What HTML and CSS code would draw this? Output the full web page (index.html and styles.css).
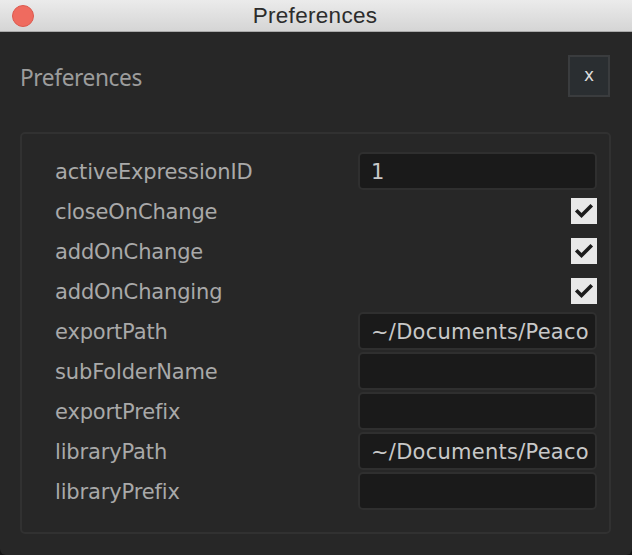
FILE: index.html
```html
<!DOCTYPE html>
<html>
<head>
<meta charset="utf-8">
<link rel="stylesheet" href="styles.css">
</head>
<body>
<div class="window">
  <div class="titlebar">
    <span class="traffic"></span>
    <span class="wintitle">Preferences</span>
  </div>
  <div class="content">
    <div class="header">
      <h1 class="heading">Preferences</h1>
      <button class="close">x</button>
    </div>
    <div class="panel">
      <div class="row"><span class="label">activeExpressionID</span><div class="field">1</div></div>
      <div class="row"><span class="label">closeOnChange</span><span class="check"><svg width="26" height="26" viewBox="0 0 26 26"><path d="M6.5 13.5 L10.5 17.5 L19.5 8.5" fill="none" stroke="#1c1c1c" stroke-width="3.6" stroke-linecap="square"/></svg></span></div>
      <div class="row"><span class="label">addOnChange</span><span class="check"><svg width="26" height="26" viewBox="0 0 26 26"><path d="M6.5 13.5 L10.5 17.5 L19.5 8.5" fill="none" stroke="#1c1c1c" stroke-width="3.6" stroke-linecap="square"/></svg></span></div>
      <div class="row"><span class="label">addOnChanging</span><span class="check"><svg width="26" height="26" viewBox="0 0 26 26"><path d="M6.5 13.5 L10.5 17.5 L19.5 8.5" fill="none" stroke="#1c1c1c" stroke-width="3.6" stroke-linecap="square"/></svg></span></div>
      <div class="row"><span class="label">exportPath</span><div class="field">~/Documents/Peaco</div></div>
      <div class="row"><span class="label">subFolderName</span><div class="field"></div></div>
      <div class="row"><span class="label">exportPrefix</span><div class="field"></div></div>
      <div class="row"><span class="label">libraryPath</span><div class="field">~/Documents/Peaco</div></div>
      <div class="row"><span class="label">libraryPrefix</span><div class="field"></div></div>
    </div>
  </div>
</div>
</body>
</html>
```
FILE: styles.css
```css
html, body {
  margin: 0;
  padding: 0;
  background: #151515;
}
.window {
  width: 632px;
  height: 555px;
  background: #272727;
  border-radius: 0 0 6px 6px;
  overflow: hidden;
  display: flex;
  flex-direction: column;
}
.titlebar {
  height: 31px;
  flex: none;
  border-bottom: 1px solid #a9a9a9;
  background: linear-gradient(#ebebeb, #d5d5d5);
  display: flex;
  align-items: center;
  justify-content: center;
  position: relative;
}
.traffic {
  position: absolute;
  left: 12px;
  top: 5px;
  width: 20px;
  height: 20px;
  border-radius: 50%;
  background: #ef6b5f;
  border: 1px solid #dc5a4f;
}
.wintitle {
  font-family: "Liberation Sans", Arial, sans-serif;
  font-size: 22.5px;
  color: #2c2c2c;
  letter-spacing: 0.3px;
  margin-left: -2px;
}
.content {
  padding: 23px 21px 0 20px;
  display: flex;
  flex-direction: column;
}
.header {
  display: flex;
  justify-content: space-between;
  align-items: center;
  height: 42px;
}
.heading {
  margin: 0;
  font-family: "Noto Sans", sans-serif;
  font-weight: normal;
  font-size: 22.7px;
  color: #9c9c9c;
  letter-spacing: -0.4px;
  padding-top: 2px;
}
.close {
  width: 42px;
  height: 42px;
  margin-right: 1px;
  background: #2a2e31;
  border: 2px solid #3a3c3e;
  color: #dcdcdc;
  font-family: "DejaVu Sans", sans-serif;
  font-size: 17px;
  padding: 0 0 3px 0;
  display: flex;
  align-items: center;
  justify-content: center;
}
.panel {
  margin-top: 35px;
  border: 2px solid #313131;
  border-radius: 5px;
  padding: 18px 12px 22px 33px;
  display: flex;
  flex-direction: column;
  gap: 2px;
}
.row {
  height: 38px;
  display: flex;
  align-items: center;
  justify-content: space-between;
}
.label {
  font-family: "DejaVu Sans", sans-serif;
  font-size: 21px;
  color: #a9a9a9;
  letter-spacing: -0.15px;
  padding-top: 2px;
}
.field {
  box-sizing: border-box;
  width: 239px;
  height: 38px;
  background: #1a1a1a;
  border: 2px solid #2f2f2f;
  border-radius: 5px;
  padding: 2px 0 0 11px;
  font-family: "DejaVu Sans", sans-serif;
  font-size: 21px;
  letter-spacing: 0.25px;
  color: #c8c8c8;
  white-space: nowrap;
  overflow: hidden;
  display: flex;
  align-items: center;
}
.check {
  width: 26px;
  height: 26px;
  background: #e8e8e8;
  display: block;
}
.check svg {
  display: block;
}
```
